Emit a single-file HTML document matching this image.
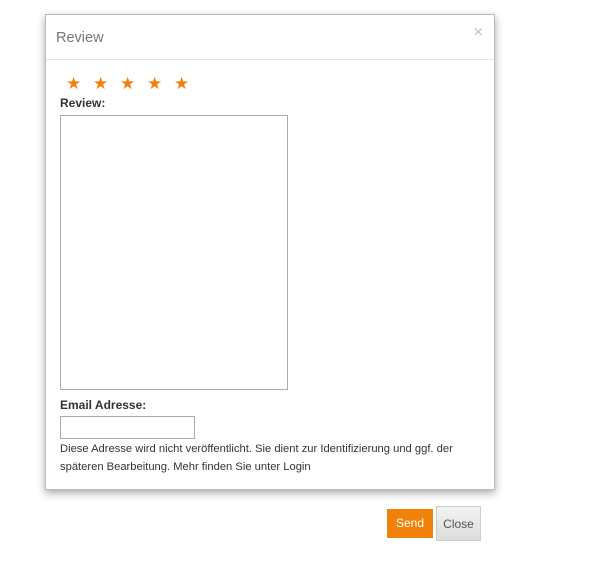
<!DOCTYPE html><html><head><style>
body{margin:0;width:616px;height:569px;background:#fff;font-family:"Liberation Sans",sans-serif;position:relative;overflow:hidden}
.m{position:absolute;left:45px;top:14px;width:450px;height:476px;background:#fff;border:1px solid #bbb;box-shadow:0 3px 8px rgba(0,0,0,.35);box-sizing:border-box}
.h{height:44px;border-bottom:1px solid #e5e5e5;position:relative}
.t{position:absolute;left:10px;top:15px;font-size:14.5px;color:#777}
.x{position:absolute;right:11px;top:9px;font-size:16px;color:#bbb}
.s{position:absolute;top:59px;font-size:17px;color:#f0820a}
.l{position:absolute;left:14px;font-size:12px;font-weight:bold;color:#333}
.ta{position:absolute;left:14px;top:100px;width:228px;height:275px;border:1px solid #aaa;box-sizing:border-box}
.in{position:absolute;left:14px;top:401px;width:135px;height:23px;border:1px solid #aaa;box-sizing:border-box}
.p{position:absolute;left:14px;top:425px;width:420px;font-size:11.2px;line-height:18px;color:#333}
.b{position:absolute;font-size:12px;text-align:center;box-sizing:border-box}
</style></head><body>
<div class="m">
<div class="h"><div class="t">Review</div><div class="x">×</div></div>
<div class="s" style="left:20px">★</div><div class="s" style="left:47px">★</div><div class="s" style="left:74px">★</div><div class="s" style="left:101px">★</div><div class="s" style="left:128px">★</div>
<div class="l" style="top:81px">Review:</div>
<div class="ta"></div>
<div class="l" style="top:383px">Email Adresse:</div>
<div class="in"></div>
<div class="p">Diese Adresse wird nicht veröffentlicht. Sie dient zur Identifizierung und ggf. der späteren Bearbeitung. Mehr finden Sie unter Login</div>
</div>
<div class="b" style="left:387px;top:509px;width:46px;height:29px;line-height:29px;background:#f0820a;color:#fff">Send</div>
<div class="b" style="left:436px;top:506px;width:45px;height:35px;line-height:35px;background:linear-gradient(#f3f3f3,#dcdcdc);border:1px solid #ccc;color:#555">Close</div>
</body></html>
